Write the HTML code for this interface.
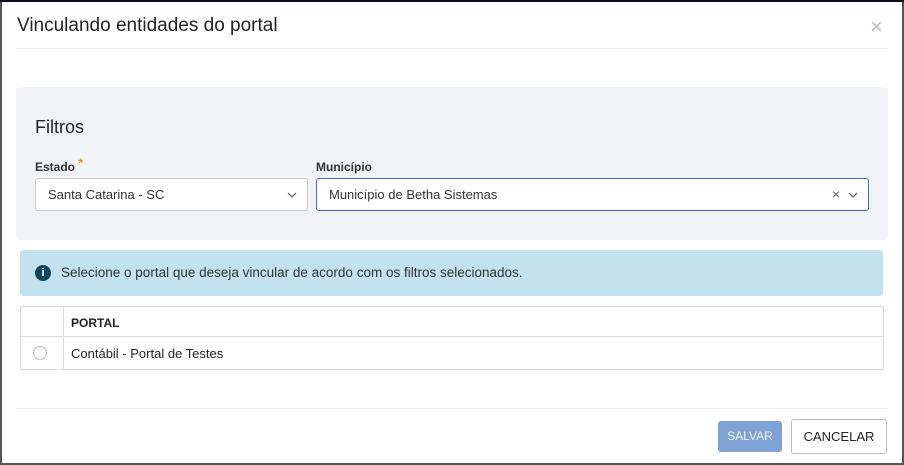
<!DOCTYPE html>
<html><head><meta charset="utf-8"><style>
*{box-sizing:border-box;margin:0;padding:0}
html,body{width:904px;height:465px;overflow:hidden;background:#555}
body{font-family:"Liberation Sans",sans-serif;color:#222;position:relative}
.top{position:absolute;left:0;top:0;width:904px;height:2px;background:#0b101c}
.m{position:absolute;left:2px;top:2px;width:900px;height:461px;background:#fff}
.a{position:absolute}
.t{left:15px;top:13px;font-size:19px;color:#222}
.x{left:868px;top:14px;font-size:22px;color:#bbb;line-height:22px}
.hr{height:1px;background:#eef0f3;left:14px;width:872px}
.f{left:14px;top:85px;width:872px;height:153px;background:#f2f3f6;border-radius:3px}
.lbl{font-size:12px;font-weight:bold;color:#333}
.in{height:33px;background:#fff;border:1px solid #ccc;border-radius:3px;font-size:13px;padding:8px 12px;color:#333}
.al{left:18px;top:248px;width:863px;height:46px;background:#c2e2ef;border-radius:3px}
.tb{left:18px;top:304px;width:864px;height:64px;border:1px solid #ddd}
.btn{font-size:13px;text-align:center;border-radius:3px}
</style></head><body>
<div class="top"></div>
<div class="m">
<div class="a t">Vinculando entidades do portal</div>
<div class="a x">×</div>
<div class="a hr" style="top:46px"></div>
<div class="a f">
 <div class="a" style="left:19px;top:30px;font-size:18px;color:#222">Filtros</div>
 <div class="a lbl" style="left:19px;top:73px">Estado <span style="color:#d98c1a;position:relative;top:-4px">*</span></div>
 <div class="a lbl" style="left:300px;top:73px">Município</div>
 <div class="a in" style="left:19px;top:91px;width:273px">Santa Catarina - SC
  <svg class="a" style="left:251px;top:13px" width="10" height="7" viewBox="0 0 10 7"><path d="M1 1l4 4 4-4" fill="none" stroke="#666" stroke-width="1.3"/></svg></div>
 <div class="a in" style="left:300px;top:91px;width:553px;border-color:#3a6fcc">Município de Betha Sistemas
  <span class="a" style="left:515px;top:7px;font-size:14px;color:#666">×</span>
  <svg class="a" style="left:531px;top:13px" width="10" height="7" viewBox="0 0 10 7"><path d="M1 1l4 4 4-4" fill="none" stroke="#666" stroke-width="1.3"/></svg></div>
</div>
<div class="a al">
 <div class="a" style="left:15px;top:15px;width:16px;height:16px;border-radius:50%;background:#14435e;color:#fff;font-size:11px;font-weight:bold;text-align:center;line-height:16px">i</div>
 <div class="a" style="left:41px;top:15px;font-size:13.5px;color:#333">Selecione o portal que deseja vincular de acordo com os filtros selecionados.</div>
</div>
<div class="a tb">
 <div class="a" style="left:0;top:29px;width:862px;height:1px;background:#ddd"></div>
 <div class="a" style="left:42px;top:0;width:1px;height:62px;background:#ddd"></div>
 <div class="a" style="left:50px;top:9px;font-size:12px;font-weight:bold;color:#222">PORTAL</div>
 <div class="a" style="left:12px;top:39px;width:14px;height:14px;border:1.5px solid #bbb;border-radius:50%"></div>
 <div class="a" style="left:50px;top:39px;font-size:13px;color:#222">Contábil - Portal de Testes</div>
</div>
<div class="a hr" style="top:406px"></div>
<div class="a btn" style="left:716px;top:419px;width:64px;height:31px;background:#7fa3d6;color:#eef3fb;line-height:31px;font-size:12px">SALVAR</div>
<div class="a btn" style="left:789px;top:417px;width:96px;height:35px;border:1px solid #bbb;background:#fff;color:#222;line-height:33px">CANCELAR</div>
</div>
</body></html>
